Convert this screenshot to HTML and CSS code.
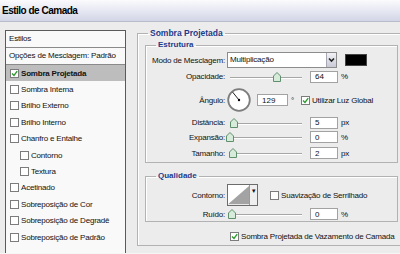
FILE: index.html
```html
<!DOCTYPE html>
<html lang="pt">
<head>
    <meta charset="UTF-8">
    <title>Estilo de Camada</title>
    <link rel="stylesheet" href="styles.css">
</head>
<body>
    <div class="titlebar">Estilo de Camada</div>
    <div class="dialog">
        <ul class="styles-list">
            <li class="head">Estilos</li>
            <li class="head">Opções de Mesclagem: Padrão</li>
            <li class="item selected"><span class="check on"><svg viewBox="0 0 7 7"><path d="M1 3.5 L3 5.5 L6.2 1.2" /></svg></span>Sombra Projetada</li>
            <li class="item"><span class="check"></span>Sombra Interna</li>
            <li class="item"><span class="check"></span>Brilho Externo</li>
            <li class="item"><span class="check"></span>Brilho Interno</li>
            <li class="item"><span class="check"></span>Chanfro e Entalhe</li>
            <li class="item sub"><span class="check"></span>Contorno</li>
            <li class="item sub"><span class="check"></span>Textura</li>
            <li class="item"><span class="check"></span>Acetinado</li>
            <li class="item"><span class="check"></span>Sobreposição de Cor</li>
            <li class="item"><span class="check"></span>Sobreposição de Degradê</li>
            <li class="item"><span class="check"></span>Sobreposição de Padrão</li>
        </ul>

        <fieldset class="group outer">
            <legend>Sombra Projetada</legend>

            <fieldset class="group inner">
                <legend>Estrutura</legend>
                <div class="form structure">
                    <label>Modo de Mesclagem:</label>
                    <div class="ctrl">
                        <div class="select">
                            <span class="select-text">Multiplicação</span>
                            <span class="select-btn"><svg viewBox="0 0 9 14"><path d="M2 5.5 L4.5 8 L7 5.5" /></svg></span>
                        </div>
                        <span class="swatch"></span>
                    </div>

                    <label>Opacidade:</label>
                    <div class="ctrl">
                        <div class="slider"><span class="track"></span><svg class="thumb" style="left:46px" viewBox="0 0 8 10"><polygon points="0.5,4 4,0.5 7.5,4 7.5,9.5 0.5,9.5" /></svg></div>
                        <input type="text" class="field" value="64">
                        <span class="unit">%</span>
                    </div>

                    <label>Ângulo:</label>
                    <div class="ctrl">
                        <svg class="dial" viewBox="0 0 24 24">
                            <circle cx="12" cy="12" r="10.8" />
                            <line x1="12" y1="12" x2="5.6" y2="4.1" />
                            <circle class="dot" cx="12" cy="12" r="1.2" />
                        </svg>
                        <input type="text" class="field wide" value="129">
                        <span class="unit">°</span>
                        <span class="check on global"><svg viewBox="0 0 7 7"><path d="M1 3.5 L3 5.5 L6.2 1.2" /></svg></span>
                        <span class="check-label">Utilizar Luz Global</span>
                    </div>

                    <label>Distância:</label>
                    <div class="ctrl">
                        <div class="slider"><span class="track"></span><svg class="thumb" style="left:3px" viewBox="0 0 8 10"><polygon points="0.5,4 4,0.5 7.5,4 7.5,9.5 0.5,9.5" /></svg></div>
                        <input type="text" class="field" value="5">
                        <span class="unit">px</span>
                    </div>

                    <label>Expansão:</label>
                    <div class="ctrl">
                        <div class="slider"><span class="track"></span><svg class="thumb" style="left:-1px" viewBox="0 0 8 10"><polygon points="0.5,4 4,0.5 7.5,4 7.5,9.5 0.5,9.5" /></svg></div>
                        <input type="text" class="field" value="0">
                        <span class="unit">%</span>
                    </div>

                    <label>Tamanho:</label>
                    <div class="ctrl">
                        <div class="slider"><span class="track"></span><svg class="thumb" style="left:2px" viewBox="0 0 8 10"><polygon points="0.5,4 4,0.5 7.5,4 7.5,9.5 0.5,9.5" /></svg></div>
                        <input type="text" class="field" value="2">
                        <span class="unit">px</span>
                    </div>
                </div>
            </fieldset>

            <fieldset class="group inner quality">
                <legend>Qualidade</legend>
                <div class="form quality-form">
                    <label>Contorno:</label>
                    <div class="ctrl">
                        <div class="contour">
                            <svg class="curve" viewBox="0 0 23 20"><polygon points="0,20 23,0 23,20" /></svg>
                            <span class="contour-btn">▾</span>
                        </div>
                        <span class="check aa"></span>
                        <span class="check-label">Suavização de Serrilhado</span>
                    </div>

                    <label>Ruído:</label>
                    <div class="ctrl">
                        <div class="slider"><span class="track"></span><svg class="thumb" style="left:1px" viewBox="0 0 8 10"><polygon points="0.5,4 4,0.5 7.5,4 7.5,9.5 0.5,9.5" /></svg></div>
                        <input type="text" class="field" value="0">
                        <span class="unit">%</span>
                    </div>
                </div>
            </fieldset>

            <div class="knockout">
                <span class="check on"><svg viewBox="0 0 7 7"><path d="M1 3.5 L3 5.5 L6.2 1.2" /></svg></span>
                <span class="check-label">Sombra Projetada de Vazamento de Camada</span>
            </div>
        </fieldset>
    </div>
</body>
</html>
```

FILE: styles.css
```css
body {
    margin: 0;
    width: 400px;
    height: 254px;
    overflow: hidden;
    background-color: #f6f6f6;
    font-family: "Liberation Sans", Arial, sans-serif;
    font-size: 8px;
    letter-spacing: -0.2px;
    color: #111;
    white-space: nowrap;
}
.titlebar {
    height: 21px;
    line-height: 22px;
    padding-left: 2px;
    border-bottom: 1px solid #b9bccb;
    background: linear-gradient(#fbfbfd, #d2d5e7);
    font-size: 10px;
    font-weight: bold;
    letter-spacing: -0.5px;
    color: #000;
}
.dialog {
    display: flex;
    align-items: flex-start;
    height: 223px;
    padding: 8px 0 0 5px;
    background-color: #ececec;
    overflow: hidden;
}

/* lista de estilos */
.styles-list {
    list-style-type: none;
    margin: 0;
    padding: 0;
    width: 119px;
    height: 240px;
    flex-shrink: 0;
    border: 1px solid #5a5a5a;
    background-color: #f9f9f9;
}
.head {
    height: 16px;
    line-height: 16px;
    padding-left: 3px;
    border-bottom: 1px solid #8a8a8a;
}
.item {
    display: flex;
    align-items: center;
    height: 16.4px;
    padding-left: 4px;
}
.item.sub {
    padding-left: 14px;
}
.selected {
    background-color: #bdbdbd;
    font-weight: bold;
}
.check {
    display: inline-flex;
    width: 7px;
    height: 7px;
    margin-right: 2px;
    border: 1px solid #7c7c7c;
    background-color: #fff;
    flex-shrink: 0;
}
.check svg {
    width: 7px;
    height: 7px;
}
.check path {
    fill: none;
    stroke: #2f9a2f;
    stroke-width: 1.4;
}

/* grupos */
.group {
    margin: 0;
    padding: 0;
    border: 1px solid #b2b2b2;
    box-shadow: inset 1px 1px 0 #fff;
}
.group legend {
    padding: 0 2px;
    line-height: 12px;
    font-size: 8px;
    font-weight: bold;
    letter-spacing: 0;
    color: #1d3a8a;
}
.outer {
    box-sizing: border-box;
    width: 268px;
    height: 219px;
    margin: -3px 0 0 11px;
    padding: 0 6px 0 7px;
    flex-shrink: 0;
}
.outer > legend {
    margin-left: 3px;
    font-size: 8.5px;
}
.inner > legend {
    margin-left: 10px;
}
.quality {
    margin-top: 7px;
}

.form {
    display: grid;
    grid-template-columns: 80px 1fr;
    align-items: center;
}
.structure {
    grid-template-rows: 18px 15px 32px 13px 16px 16px;
    padding-bottom: 1px;
}
.quality-form {
    grid-template-rows: 26px 12px;
    padding-bottom: 1px;
}
.form label {
    text-align: right;
    padding-right: 1px;
}
.ctrl {
    display: flex;
    align-items: center;
    padding-left: 1px;
}

/* controles */
.select {
    display: flex;
    box-sizing: border-box;
    width: 110px;
    height: 16px;
    border: 1px solid #8c8c8c;
    background-color: #fff;
}
.select-text {
    flex: 1;
    padding-left: 2px;
    line-height: 14px;
}
.select-btn {
    width: 9px;
    background: linear-gradient(#f2f2f6, #c9cad6);
    border-left: 1px solid #a8a8b4;
}
.select-btn svg {
    width: 9px;
    height: 14px;
}
.select-btn path {
    fill: none;
    stroke: #222;
    stroke-width: 1.6;
}
.swatch {
    width: 20px;
    height: 10px;
    margin-left: 8px;
    border: 1px solid #444;
    background-color: #000;
}
.slider {
    position: relative;
    width: 80px;
    height: 10px;
}
.track {
    position: absolute;
    left: 3px;
    right: 5px;
    top: 5px;
    height: 1px;
    background-color: #a6a6a6;
    border-bottom: 1px solid #fff;
}
.thumb {
    position: absolute;
    top: 0;
    width: 8px;
    height: 10px;
}
.thumb polygon {
    fill: #d6ebda;
    stroke: #5f8f6c;
    stroke-width: 1;
}
.field {
    box-sizing: border-box;
    width: 28px;
    height: 12px;
    margin: 0 0 0 3px;
    padding: 0 4px;
    border: 1px solid #a2a2a2;
    background-color: #fff;
    font-family: inherit;
    font-size: 8px;
    color: #111;
}
.field.wide {
    width: 31px;
    margin-left: 6px;
}
.unit {
    margin-left: 3px;
}
.dial {
    width: 24px;
    height: 24px;
}
.dial circle {
    fill: #fff;
    stroke: #7d7d7d;
    stroke-width: 1.8;
}
.dial line {
    stroke: #222;
    stroke-width: 1;
}
.dial .dot {
    fill: #000;
    stroke: none;
}
.check.global {
    margin-left: 7px;
}
.contour {
    display: flex;
    box-sizing: border-box;
    width: 31px;
    height: 22px;
    border: 1px solid #6c6c6c;
    background-color: #fff;
}
.curve {
    width: 22px;
    height: 20px;
}
.curve polygon {
    fill: #a3a3a3;
}
.contour-btn {
    width: 7px;
    border-left: 1px solid #9a9a9a;
    background-color: #efefef;
    font-size: 7px;
    line-height: 12px;
    text-align: center;
}
.check.aa {
    margin-left: 12px;
}
.knockout {
    display: flex;
    align-items: center;
    height: 16px;
    margin: 6px 0 0 85px;
}
```
